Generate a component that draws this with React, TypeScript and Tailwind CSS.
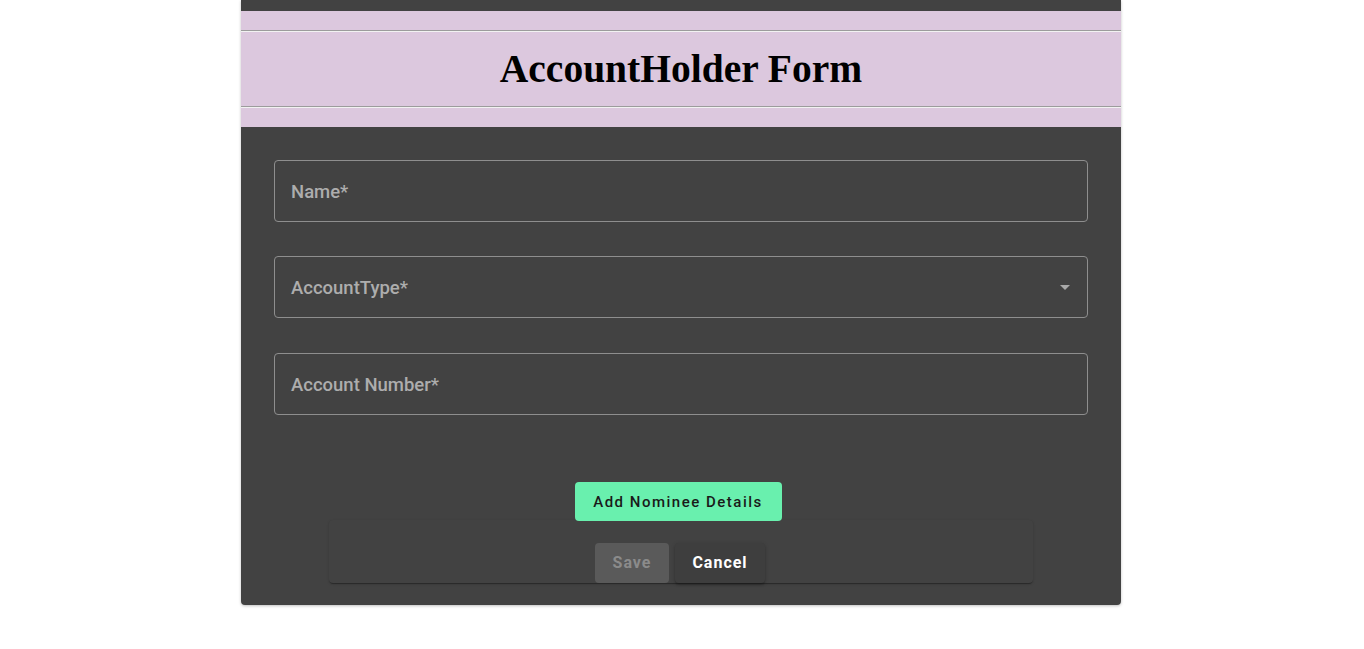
import { ReactNode } from "react";

const roboto = { fontFamily: "Roboto, 'Noto Sans', sans-serif" };

function Divider() {
  return (
    <div className="flex flex-col">
      <div className="h-px bg-[#9c9c9c]" />
      <div className="h-px bg-[#f2f2f2]" />
    </div>
  );
}

function Field({ label, select }: { label: string; select?: boolean }) {
  return (
    <div className="flex h-[62px] items-center justify-between rounded-[4px] border border-[#8e8e8e] pl-[16px] pr-[10px]">
      <span className="pt-[3px] text-[18.5px] font-medium text-[#adadad]">{label}</span>
      {select && (
        <svg width="24" height="24" viewBox="0 0 24 24" className="fill-[#a9a9a9]">
          <path d="M7 10l5 5 5-5z" />
        </svg>
      )}
    </div>
  );
}

function ActionButton({ children, disabled }: { children: ReactNode; disabled?: boolean }) {
  return (
    <button
      className={
        disabled
          ? "h-[40px] w-[74px] rounded-[4px] bg-[#5a5a5a] text-[16px] font-bold tracking-[1px] text-[#8b8b8b]"
          : "h-[40px] w-[90px] rounded-[4px] bg-[#3e3e3e] text-[16px] font-bold tracking-[1px] text-white shadow-[0_2px_2px_0_rgba(0,0,0,0.2),0_1px_4px_0_rgba(0,0,0,0.15)]"
      }
    >
      {children}
    </button>
  );
}

export default function App() {
  return (
    <div className="min-h-[649px] bg-white pr-[2px]" style={roboto}>
      <div className="mx-auto w-[880px] rounded-b-[4px] bg-[#424242] pt-[11px] pb-[22px] shadow-[0_1px_3px_0_rgba(0,0,0,0.25)]">
        {/* header band */}
        <div className="bg-[#dcc8de] pt-[19px] pb-[19px]">
          <Divider />
          <div className="flex h-[74px] items-center justify-center">
            <h1
              className="text-[39.5px] leading-[43px] font-bold text-black"
              style={{ fontFamily: "'Liberation Serif', 'Times New Roman', serif" }}
            >
              AccountHolder Form
            </h1>
          </div>
          <Divider />
        </div>

        {/* form fields */}
        <div className="flex flex-col px-[33px] pt-[33px]">
          <Field label="Name*" />
          <div className="mt-[34px]">
            <Field label="AccountType*" select />
          </div>
          <div className="mt-[35px]">
            <Field label="Account Number*" />
          </div>
        </div>

        <div className="mt-[67px] flex justify-center pr-[6px]">
          <button className="h-[39px] w-[207px] rounded-[4px] bg-[#69f0ae] pt-[1px] text-[15px] font-medium tracking-[1.5px] text-[#1a1a1a]">
            Add Nominee Details
          </button>
        </div>

        <div className="mx-auto -mt-px flex h-[63px] w-[704px] items-end justify-center gap-[6px] rounded-[4px] bg-[#424242] pr-[2px] shadow-[0_2px_1px_-1px_rgba(0,0,0,0.2),0_1px_1px_0_rgba(0,0,0,0.14),0_1px_3px_0_rgba(0,0,0,0.12)]">
          <ActionButton disabled>Save</ActionButton>
          <ActionButton>Cancel</ActionButton>
        </div>
      </div>
    </div>
  );
}
